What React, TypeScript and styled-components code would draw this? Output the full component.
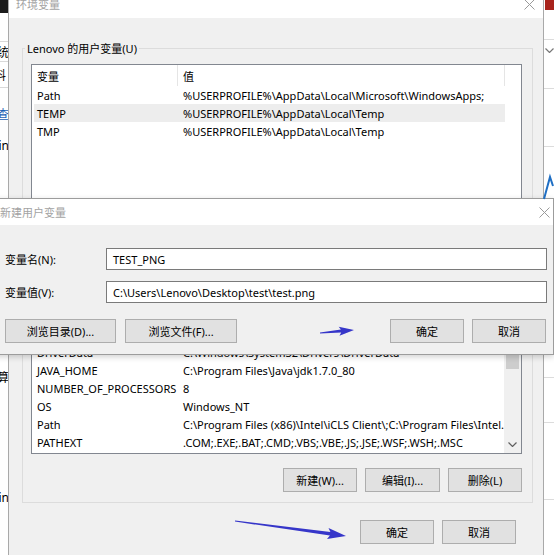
import styled, { createGlobalStyle } from 'styled-components';

const GlobalStyle = createGlobalStyle`
  html, body {
    margin: 0;
    padding: 0;
    background: #fff;
  }
  body {
    font-family: "Noto Sans", "Noto Sans CJK SC", sans-serif;
    font-size: 11px;
    color: #000;
  }
  * {
    box-sizing: border-box;
  }
`;

const Desktop = styled.div`
  position: relative;
  width: 554px;
  height: 555px;
  overflow: hidden;
  background: #fff;
`;

/* windows behind the dialog */

const LeftWindow = styled.div`
  position: absolute;
  top: 0;
  left: -191px;
  width: 200px;
  height: 555px;
  z-index: 1;
  background: #fff;
  display: flex;
  flex-direction: column;
`;

const DarkBar = styled.div`
  height: 13px;
  background: #1b1b1b;
`;

const Strip = styled.div<{ $h: number; $line?: boolean; $color?: string }>`
  height: ${(p) => p.$h}px;
  flex: none;
  display: flex;
  align-items: center;
  justify-content: flex-end;
  border-bottom: ${(p) => (p.$line ? '1px solid #d9d9d9' : 'none')};
  color: ${(p) => p.$color || '#000'};
  font-size: 12px;
  white-space: nowrap;
`;

const RightWindow = styled.div`
  position: absolute;
  top: 0;
  left: 530px;
  width: 40px;
  height: 555px;
  z-index: 1;
  background: #fff;
  display: flex;
  flex-direction: column;
`;

const RedBar = styled.div`
  height: 10px;
  margin-left: 15px;
  background: #a8231c;
`;

const RightRow = styled.div<{ $h: number; $line?: boolean }>`
  height: ${(p) => p.$h}px;
  flex: none;
  border-bottom: ${(p) => (p.$line ? '1px solid #dcdcdc' : 'none')};
  padding-left: 15px;
  display: flex;
  align-items: center;
`;

/* main window */

const MainWindow = styled.div`
  position: absolute;
  top: -10px;
  left: 8px;
  width: 536px;
  height: 600px;
  z-index: 2;
  background: #f0f0f0;
  border-left: 1px solid #a9a9a9;
  border-right: 1px solid #a9a9a9;
  display: flex;
  flex-direction: column;
`;

const TitleBar = styled.div<{ $h: number; $pad: number }>`
  height: ${(p) => p.$h}px;
  flex: none;
  background: #fff;
  display: flex;
  align-items: center;
  padding-left: ${(p) => p.$pad}px;
`;

const TitleText = styled.span`
  flex: 1;
  color: #a3a3a3;
  font-size: 11px;
`;

const CloseBox = styled.span<{ $w: number }>`
  width: ${(p) => p.$w}px;
  display: flex;
  align-items: center;
  justify-content: center;
`;

const MainBody = styled.div`
  padding: 22px 10px 0 13px;
  display: flex;
  flex-direction: column;
`;

const GroupBox = styled.fieldset<{ $gap?: number }>`
  margin: ${(p) => p.$gap || 0}px 0 0 0;
  padding: 7px 10px 10px 8px;
  border: 1px solid #dcdcdc;
  min-width: 0;
`;

const Legend = styled.legend`
  padding: 0 2px;
  margin-left: -6px;
  line-height: 17px;
  font-size: 11px;
`;

const ListBox = styled.div<{ $h: number }>`
  height: ${(p) => p.$h}px;
  border: 1px solid #828790;
  background: #fff;
  display: flex;
  overflow: hidden;
`;

const ListContent = styled.div`
  flex: 1;
  display: flex;
  flex-direction: column;
  min-width: 0;
`;

const ListHeader = styled.div`
  height: 21px;
  flex: none;
  display: grid;
  grid-template-columns: 146px 327px;
`;

const HeaderCell = styled.div`
  padding-left: 5px;
  border-right: 1px solid #e5e5e5;
  display: flex;
  align-items: center;
`;

const RowsViewport = styled.div<{ $bottom?: boolean }>`
  flex: 1;
  overflow: hidden;
  display: flex;
  flex-direction: column;
  justify-content: ${(p) => (p.$bottom ? 'flex-end' : 'flex-start')};
  padding-bottom: ${(p) => (p.$bottom ? 2 : 0)}px;
`;

const ListRow = styled.div<{ $selected?: boolean }>`
  height: 18px;
  flex: none;
  width: 471px;
  margin-left: 2px;
  display: grid;
  grid-template-columns: 144px 1fr;
  align-items: center;
  white-space: nowrap;
  background: ${(p) => (p.$selected ? '#ededed' : 'transparent')};
`;

const Cell = styled.span<{ $pad: number }>`
  padding-left: ${(p) => p.$pad}px;
  overflow: hidden;
`;

const ScrollBar = styled.div`
  width: 17px;
  flex: none;
  background: #f0f0f0;
  display: flex;
  flex-direction: column;
`;

const ScrollArrow = styled.div`
  height: 17px;
  flex: none;
  display: flex;
  align-items: center;
  justify-content: center;
`;

const ScrollTrack = styled.div`
  flex: 1;
  display: flex;
  flex-direction: column;
`;

const Thumb = styled.div<{ $top: number; $h: number }>`
  margin: ${(p) => p.$top}px 2px 0 2px;
  height: ${(p) => p.$h}px;
  background: #cdcdcd;
`;

const ButtonRow = styled.div<{ $top: number; $gap?: number; $right?: number }>`
  margin-top: ${(p) => p.$top}px;
  margin-right: ${(p) => p.$right || 0}px;
  display: flex;
  justify-content: flex-end;
  gap: ${(p) => p.$gap ?? 8}px;
`;

const Button = styled.button<{ $w: number; $left?: number }>`
  width: ${(p) => p.$w}px;
  height: 24px;
  margin-left: ${(p) => p.$left || 0}px;
  padding: 0;
  background: #e1e1e1;
  border: 1px solid #adadad;
  border-radius: 0;
  font-family: inherit;
  font-size: 11px;
  color: #000;
`;

const Spacer = styled.div`
  flex: 1;
`;

/* the new-variable dialog on top */

const Dialog = styled.div`
  position: absolute;
  top: 198px;
  left: -20px;
  width: 574px;
  z-index: 3;
  border: 1px solid #9c9c9c;
  box-shadow: 0 2px 6px rgba(0, 0, 0, 0.18);
  background: #f0f0f0;
`;

const DialogBody = styled.div`
  padding: 23px 6px 11px 24px;
  display: flex;
  flex-direction: column;
  gap: 11px;
`;

const FieldRow = styled.div`
  display: grid;
  grid-template-columns: 101px 1fr;
  align-items: center;
`;

const TextBox = styled.div`
  height: 22px;
  border: 1px solid #7a7a7a;
  background: #fff;
  padding-left: 6px;
  display: flex;
  align-items: center;
  white-space: nowrap;
`;

const Overlay = styled.svg`
  position: absolute;
  top: 0;
  left: 0;
  z-index: 5;
  pointer-events: none;
`;

function CloseIcon() {
  return (
    <svg width="11" height="11" viewBox="0 0 11 11">
      <path d="M0.5 0.5L10.5 10.5M10.5 0.5L0.5 10.5" stroke="#9a9a9a" strokeWidth="1" />
    </svg>
  );
}

function Chevron({ color = '#606060' }: { color?: string }) {
  return (
    <svg width="9" height="5" viewBox="0 0 9 5">
      <path d="M0.5 0.5L4.5 4.5L8.5 0.5" stroke={color} strokeWidth="1.2" fill="none" />
    </svg>
  );
}

function arrowPath(x1: number, y1: number, x2: number, y2: number, headLen: number, half: number, w0: number, w1: number) {
  const len = Math.hypot(x2 - x1, y2 - y1);
  const dx = (x2 - x1) / len;
  const dy = (y2 - y1) / len;
  const nx = -dy;
  const ny = dx;
  const bx = x2 - dx * headLen;
  const by = y2 - dy * headLen;
  const cx = x2 - dx * headLen * 1.15;
  const cy = y2 - dy * headLen * 1.15;
  const pts = [
    [x1 + (nx * w0) / 2, y1 + (ny * w0) / 2],
    [bx + (nx * w1) / 2, by + (ny * w1) / 2],
    [cx + nx * half, cy + ny * half],
    [x2, y2],
    [cx - nx * half, cy - ny * half],
    [bx - (nx * w1) / 2, by - (ny * w1) / 2],
    [x1 - (nx * w0) / 2, y1 - (ny * w0) / 2],
  ];
  return 'M' + pts.map((p) => p[0].toFixed(1) + ' ' + p[1].toFixed(1)).join('L') + 'Z';
}

const userVars = [
  { name: 'Path', value: '%USERPROFILE%\\AppData\\Local\\Microsoft\\WindowsApps;' },
  { name: 'TEMP', value: '%USERPROFILE%\\AppData\\Local\\Temp', selected: true },
  { name: 'TMP', value: '%USERPROFILE%\\AppData\\Local\\Temp' },
];

const systemVars = [
  { name: 'ComSpec', value: 'C:\\Windows\\system32\\cmd.exe' },
  { name: 'DriverData', value: 'C:\\Windows\\System32\\Drivers\\DriverData' },
  { name: 'JAVA_HOME', value: 'C:\\Program Files\\Java\\jdk1.7.0_80' },
  { name: 'NUMBER_OF_PROCESSORS', value: '8' },
  { name: 'OS', value: 'Windows_NT' },
  { name: 'Path', value: 'C:\\Program Files (x86)\\Intel\\iCLS Client\\;C:\\Program Files\\Intel...' },
  { name: 'PATHEXT', value: '.COM;.EXE;.BAT;.CMD;.VBS;.VBE;.JS;.JSE;.WSF;.WSH;.MSC' },
];

export default function App() {
  return (
    <Desktop>
      <GlobalStyle />

      <LeftWindow>
        <DarkBar />
        <Strip $h={29} $line />
        <Strip $h={20} $line>系统</Strip>
        <Strip $h={26} $line>资料&nbsp;</Strip>
        <Strip $h={52} $color="#1a5fb4">检查</Strip>
        <Strip $h={10}>Win</Strip>
        <Strip $h={217} />
        <Strip $h={20}>计算</Strip>
        <Strip $h={100} />
        <Strip $h={20}>Win</Strip>
      </LeftWindow>

      <RightWindow>
        <RedBar />
        <RightRow $h={30} $line />
        <RightRow $h={20}>
          <Chevron color="#777" />
        </RightRow>
        <RightRow $h={29} $line />
        <RightRow $h={58} $line />
        <RightRow $h={231} $line />
        <RightRow $h={45} $line />
        <RightRow $h={77} $line />
      </RightWindow>

      <MainWindow>
        <TitleBar $h={28} $pad={7}>
          <TitleText>环境变量</TitleText>
          <CloseBox $w={28}>
            <CloseIcon />
          </CloseBox>
        </TitleBar>
        <MainBody>
          <GroupBox>
            <Legend>Lenovo 的用户变量(U)</Legend>
            <ListBox $h={150}>
              <ListContent>
                <ListHeader>
                  <HeaderCell>变量</HeaderCell>
                  <HeaderCell>值</HeaderCell>
                </ListHeader>
                <RowsViewport>
                  {userVars.map((v) => (
                    <ListRow key={v.name} $selected={v.selected}>
                      <Cell $pad={3}>{v.name}</Cell>
                      <Cell $pad={5}>{v.value}</Cell>
                    </ListRow>
                  ))}
                </RowsViewport>
              </ListContent>
            </ListBox>
            <ButtonRow $top={10}>
              <Button $w={74}>新建(N)...</Button>
              <Button $w={75}>编辑(E)...</Button>
              <Button $w={74}>删除(D)</Button>
            </ButtonRow>
          </GroupBox>

          <GroupBox $gap={8}>
            <Legend>系统变量(S)</Legend>
            <ListBox $h={163}>
              <ListContent>
                <ListHeader>
                  <HeaderCell>变量</HeaderCell>
                  <HeaderCell>值</HeaderCell>
                </ListHeader>
                <RowsViewport $bottom>
                  {systemVars.map((v) => (
                    <ListRow key={v.name}>
                      <Cell $pad={3}>{v.name}</Cell>
                      <Cell $pad={5}>{v.value}</Cell>
                    </ListRow>
                  ))}
                </RowsViewport>
              </ListContent>
              <ScrollBar>
                <ScrollArrow />
                <ScrollTrack>
                  <Thumb $top={0} $h={60} />
                </ScrollTrack>
                <ScrollArrow>
                  <Chevron />
                </ScrollArrow>
              </ScrollBar>
            </ListBox>
            <ButtonRow $top={14}>
              <Button $w={74}>新建(W)...</Button>
              <Button $w={75}>编辑(I)...</Button>
              <Button $w={74}>删除(L)</Button>
            </ButtonRow>
          </GroupBox>

          <ButtonRow $top={17} $right={17}>
            <Button $w={74}>确定</Button>
            <Button $w={74}>取消</Button>
          </ButtonRow>
        </MainBody>
      </MainWindow>

      <Dialog>
        <TitleBar $h={26} $pad={19}>
          <TitleText>新建用户变量</TitleText>
          <CloseBox $w={18}>
            <CloseIcon />
          </CloseBox>
        </TitleBar>
        <DialogBody>
          <FieldRow>
            <span>变量名(N):</span>
            <TextBox>TEST_PNG</TextBox>
          </FieldRow>
          <FieldRow>
            <span>变量值(V):</span>
            <TextBox>C:\Users\Lenovo\Desktop\test\test.png</TextBox>
          </FieldRow>
          <ButtonRow $top={5} $gap={0} $right={1}>
            <Button $w={111}>浏览目录(D)...</Button>
            <Button $w={112} $left={9}>浏览文件(F)...</Button>
            <Spacer />
            <Button $w={74}>确定</Button>
            <Button $w={74} $left={8}>取消</Button>
          </ButtonRow>
        </DialogBody>
      </Dialog>

      <Overlay width="554" height="555" viewBox="0 0 554 555">
        <path d={arrowPath(320, 333, 354, 330, 13, 4.5, 1, 3)} fill="#3636c9" />
        <path d={arrowPath(235, 521, 346, 536, 16, 5.5, 1, 3.5)} fill="#3636c9" />
        <path d="M544 199L550 177L553 186" stroke="#1f6fc4" strokeWidth="2" fill="none" />
      </Overlay>
    </Desktop>
  );
}
